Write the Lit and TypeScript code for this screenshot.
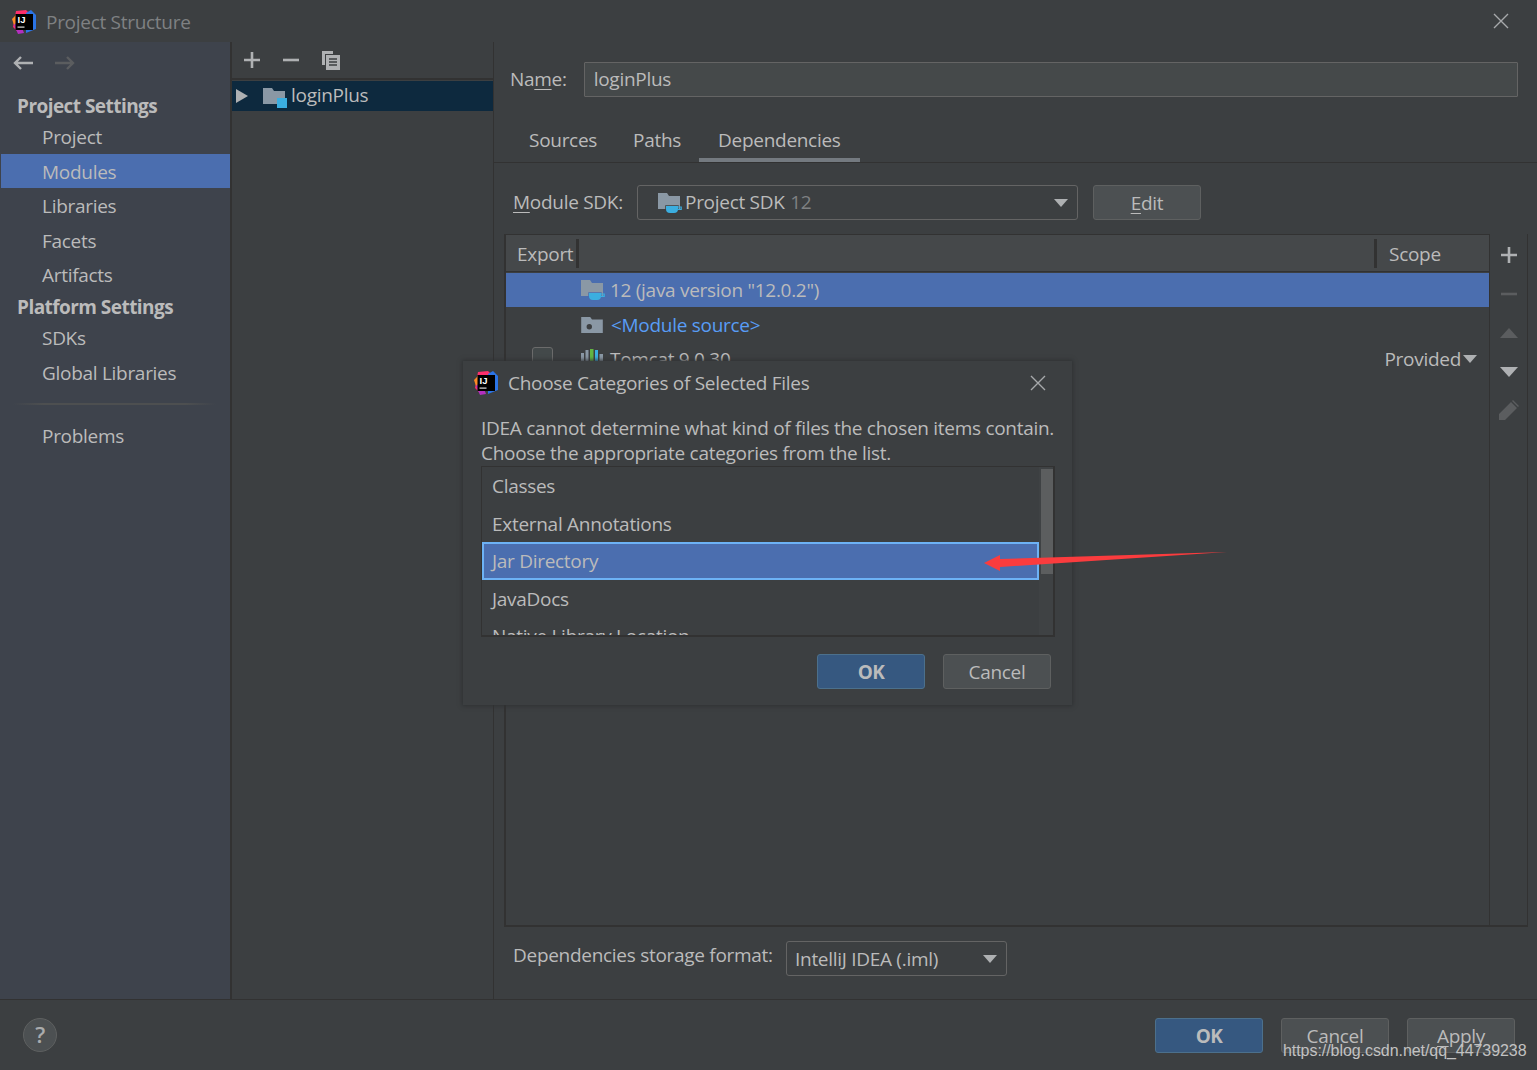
import { LitElement, html, css, svg } from "lit";
import { customElement } from "lit/decorators.js";

const logo = () => html`<svg class="logo" viewBox="0 0 24 24" width="24" height="24">
  <polygon points="4,1 14,0 18,4 6,22 1,17" fill="#fc2f6b"/>
  <polygon points="0,9 4,5 7,13 2,15" fill="#fd8a24"/>
  <polygon points="2,15 7,10 12,23 6,24" fill="#b32fbf"/>
  <polygon points="14,3 19,0 24,5 24,19 14,23" fill="#2b74e6"/>
  <rect x="3.5" y="4" width="17.5" height="16" fill="#000"/>
  <rect x="5.5" y="16.5" width="7" height="1.2" fill="#ddd"/>
  <text x="5.5" y="12.5" font-family="Liberation Sans" font-weight="700" font-size="9.5" letter-spacing="0" fill="#fff">IJ</text>
</svg>`;

const cup = (bg: string) => svg`<path d="M8 14h12v3a4 4 0 0 1-4 4h-4a4 4 0 0 1-4-4z" fill="#3baee0" stroke=${bg} stroke-width="1.5" paint-order="stroke"/><path d="M20 15h3.2v2.4H20" fill="none" stroke="#3baee0" stroke-width="1.2"/>`;
const sdkFolder = (bg: string) => html`<svg class="ic" viewBox="0 0 24 22" width="24" height="22"><path d="M0 1h9l2 3h11v13H0z" fill="#8a98a5"/>${cup(bg)}</svg>`;
const moduleFolder = () => html`<svg class="ic" viewBox="0 0 24 24" width="24" height="24"><path d="M0 3h9l2 3h11v13H0z" fill="#8a98a5"/><rect x="14" y="13" width="10" height="10" fill="#3baee0"/></svg>`;
const srcFolder = () => html`<svg class="ic" viewBox="0 0 24 20" width="22" height="18"><path d="M0 1h10l2 3h12v15H0z" fill="#8a98a5"/><circle cx="9" cy="12" r="3" fill="#3c3f41"/></svg>`;
const libIcon = () => html`<svg class="ic" viewBox="0 0 24 20" width="24" height="20"><rect x="0" y="4" width="3" height="16" fill="#8a98a5"/><rect x="4.5" y="1" width="3" height="19" fill="#8a98a5"/><rect x="9" y="0" width="3.5" height="20" fill="#62b543"/><rect x="14" y="1" width="3" height="19" fill="#3baee0"/><rect x="18.5" y="5" width="3.5" height="15" fill="#8a98a5"/></svg>`;
const caret = () => html`<svg class="caret" viewBox="0 0 14 8" width="14" height="8"><polygon points="0,0 14,0 7,8" fill="#aeb0b2"/></svg>`;
const closeX = (cls: string) => html`<svg class=${cls} viewBox="0 0 16 16" width="16" height="16"><path d="M1 1l14 14M15 1L1 15" stroke="#a7a9ab" stroke-width="1.4" fill="none"/></svg>`;

@customElement("app-root")
export class AppRoot extends LitElement {
  static styles = css`
    :host {
      display: block; position: relative; width: 1537px; height: 1070px; overflow: hidden;
      background: #3c3f41; color: #bbbbbb;
      font-family: "Open Sans", "Noto Sans", sans-serif; font-size: 19px; letter-spacing: -0.29px;
    }
    .u { text-decoration: underline; text-underline-offset: 3px; text-decoration-thickness: 1px; }
    .titlebar { display: flex; align-items: center; height: 42px; padding: 2px 0 0 12px; box-sizing: border-box; gap: 10px; color: #7f8183; }
    .titlebar .x { margin-left: auto; margin-right: 28px; margin-top: -2px; }
    .body { display: flex; height: 957px; border-bottom: 1px solid #323232; box-sizing: content-box; }
    .side { width: 229px; background: #3e434c; border-right: 2px solid #323232; padding-left: 1px; box-sizing: content-box; flex: none; }
    .nav { display: flex; align-items: center; height: 48px; padding: 0 0 0 11px; gap: 20px; box-sizing: border-box; margin-top: -3px; }
    .h { height: 31px; line-height: 37px; padding-left: 16px; font-weight: 700; margin-top: 1px; letter-spacing: -0.55px; }
    .h.p { height: 28.5px; line-height: 30px; margin-top: 0; }
    .item { height: 34.5px; line-height: 36px; padding-left: 41px; }
    .item.sel { background: #4b6eaf; }
    .sep { height: 2px; margin: 14px 14px 13px 12px; background: linear-gradient(90deg, #3e434c, #4d4f50 15%, #4d4f50 85%, #3e434c); }
    .tree { width: 261px; flex: none; border-right: 1px solid #323232; }
    .treebar { display: flex; align-items: center; height: 38px; padding-left: 11px; gap: 21px; border-bottom: 2px solid #323232; box-sizing: border-box; }
    .treerow { display: flex; align-items: center; height: 30px; margin-top: 1px; background: #0d293e; padding-left: 4px; box-sizing: border-box; }
    .treerow .arrow { margin-right: 15px; }
    .treerow .ic { margin-right: 4px; margin-top: 1px; }
    .treerow span { margin-top: -3px; }
    .main { flex: 1; display: flex; flex-direction: column; min-width: 0; }
    .namerow { display: flex; align-items: center; height: 37px; margin-top: 19px; padding: 0 19px 0 16px; gap: 17px; flex: none; }
    .namerow > span { margin-top: -1px; }
    .field { flex: 1; height: 35px; line-height: 33px; border: 1px solid #646464; background: #45494a; padding-left: 9px; box-sizing: border-box; border-radius: 1px; }
    .tabs { display: flex; height: 62px; margin-top: 3px; padding-left: 17px; border-bottom: 1px solid #323232; box-sizing: border-box; align-items: flex-end; flex: none; }
    .tab { padding: 0 16px 0 18px; height: 41px; line-height: 38px; box-sizing: border-box; margin-right: 2px; white-space: nowrap; }
    .tab.on { border-bottom: 4px solid #747a80; margin-right: 0; padding: 0 19px 0 19px; }
    .sdkrow { display: flex; align-items: center; height: 35px; margin-top: 22px; padding-left: 19px; flex: none; }
    .sdkrow .lbl { width: 124px; margin-top: -2px; }
    .combo { display: flex; align-items: center; height: 35px; border: 1px solid #646464; border-radius: 3px; box-sizing: border-box; position: relative; }
    .combo.sdk { width: 441px; padding-left: 20px; gap: 3px; }
    .combo.sdk > span { margin-top: -2px; }
    .combo .caret { position: absolute; right: 9px; top: 13px; }
    .muted { color: #7f8183; margin-left: 1px; }
    .btn { width: 108px; height: 35px; line-height: 35px; text-align: center; border: 1px solid #5e6060; border-radius: 3px; background: #4c5052; box-sizing: border-box; flex: none; }
    .btn.def { background: #365880; border-color: #4c708c; font-weight: 700; letter-spacing: -0.55px; }
    .sdkrow .btn { margin-left: 15px; }
    .tablewrap { display: flex; flex: none; height: 693px; margin: 14px 9px 0 10px; border-bottom: 2px solid #323232; border-left: 2px solid #323232; border-right: 1px solid #323232; box-sizing: border-box; }
    .table { flex: 1; min-width: 0; border-right: 1px solid #323232; }
    .thead { display: flex; height: 38px; background: #45484a; border-top: 1px solid #323232; box-sizing: border-box; align-items: center; border-bottom: 1px solid #323232; }
    .thead .c { height: 29px; line-height: 31px; box-sizing: border-box; }
    .thead .exp { width: 73px; padding-left: 11px; border-right: 3px solid #323232; }
    .thead .mid { width: 798px; border-right: 3px solid #323232; }
    .thead .sc { padding-left: 12px; }
    .row { display: flex; align-items: center; height: 35px; padding-left: 75px; gap: 5px; position: relative; box-sizing: border-box; }
    .row.sel { background: #4b6eaf; height: 34px; margin-top: 1px; }
    .row.src { gap: 8px; }
    .row.tom { padding-bottom: 2px; }
    .link { color: #589df6; }
    .check { position: absolute; left: 26px; top: 5px; width: 21px; height: 21px; border: 1px solid #6b6b6b; border-radius: 3px; background: #43494a; box-sizing: border-box; }
    .scope { position: absolute; right: 12px; top: 0; height: 33px; display: flex; align-items: center; gap: 2px; }
    .tools { width: 37px; flex: none; display: flex; flex-direction: column; align-items: center; box-sizing: border-box; }
    .tools svg { display: block; flex: none; }
    .t1 { margin-top: 12px; }
    .t2 { margin-top: 21px; }
    .t3 { margin-top: 25px; }
    .t4 { margin-top: 29px; }
    .t5 { margin-top: 23px; }
    .fmt { display: flex; align-items: center; height: 35px; margin-top: 14px; padding-left: 19px; flex: none; }
    .fmt .lbl { width: 273px; margin-top: -8px; white-space: nowrap; }
    .combo.iml { width: 221px; padding-left: 8px; }
    .footer { display: flex; align-items: center; height: 70px; padding: 0 22px 0 23px; gap: 18px; box-sizing: border-box; }
    .help { width: 34px; height: 34px; border-radius: 50%; background: #4c5052; border: 1px solid #5e6060; box-sizing: border-box; text-align: center; line-height: 31px; font-weight: 600; margin-right: auto; font-size: 22px; color: #a9abad; }
    .dialog { position: absolute; left: 463px; top: 361px; width: 609px; height: 344px; background: #3c3f41; box-shadow: 0 0 4px 1px #2f3133; padding: 0 17px 0 18px; box-sizing: border-box; display: flex; flex-direction: column; }
    .dtitle { display: flex; align-items: center; height: 44px; margin-left: -7px; gap: 10px; margin-right: -2px; flex: none; }
    .dtitle .x { margin-left: auto; margin-right: 11px; }
    .dtext { margin-top: 11px; line-height: 25px; white-space: nowrap; flex: none; }
    .list { position: relative; height: 171px; border: 1px solid #323232; border-width: 1px 2px 2px 1px; overflow: hidden; box-sizing: border-box; flex: none; }
    .li { height: 37.5px; line-height: 39px; padding-left: 10px; box-sizing: border-box; margin-right: 14px; white-space: nowrap; }
    .li.sel { background: #4b6eaf; border: 2px solid #6db2f5; line-height: 35px; padding-left: 8px; }
    .track { position: absolute; right: 0; top: 0; bottom: 0; width: 14px; background: #3f4244; }
    .thumb { position: absolute; right: 0; top: 2px; width: 12px; height: 105px; background: #5c5e5f; }
    .dbtns { display: flex; justify-content: flex-end; gap: 18px; margin-top: 17px; margin-right: 4px; }
    .arrow-red { position: absolute; left: 980px; top: 548px; }
    .mark { position: absolute; left: 1283px; top: 1041px; font-family: "Liberation Sans", sans-serif; font-size: 16px; letter-spacing: -0.06px; color: #c2c2c2; line-height: 20px; white-space: nowrap; }
  `;

  render() {
    return html`
      <div class="titlebar">${logo()}<span>Project Structure</span>${closeX("x")}</div>
      <div class="body">
        <aside class="side">
          <div class="nav">
            <svg viewBox="0 0 22 16" width="22" height="16"><path d="M21 8H3M9 2L3 8l6 6" stroke="#afb1b3" stroke-width="2.4" fill="none"/></svg>
            <svg viewBox="0 0 22 16" width="22" height="16"><path d="M1 8h18M13 2l6 6-6 6" stroke="#5b5d5f" stroke-width="2.4" fill="none"/></svg>
          </div>
          <div class="h">Project Settings</div>
          <div class="item">Project</div>
          <div class="item sel">Modules</div>
          <div class="item">Libraries</div>
          <div class="item">Facets</div>
          <div class="item">Artifacts</div>
          <div class="h p">Platform Settings</div>
          <div class="item">SDKs</div>
          <div class="item">Global Libraries</div>
          <div class="sep"></div>
          <div class="item">Problems</div>
        </aside>
        <section class="tree">
          <div class="treebar">
            <svg viewBox="0 0 18 18" width="18" height="18"><path d="M9 1v16M1 9h16" stroke="#afb1b3" stroke-width="2.6"/></svg>
            <svg viewBox="0 0 18 18" width="18" height="18"><path d="M1 9h16" stroke="#afb1b3" stroke-width="2.6"/></svg>
            <svg viewBox="0 0 20 20" width="20" height="20"><path d="M1 1h11v3H4v11H1z" fill="#afb1b3"/><path d="M5 5h14v15H5z" fill="#afb1b3"/><path d="M8 9h8M8 12h8M8 15h8" stroke="#3c3f41" stroke-width="1.4"/></svg>
          </div>
          <div class="treerow">
            <svg class="arrow" viewBox="0 0 12 14" width="12" height="14"><polygon points="0,0 12,7 0,14" fill="#aeb0b2"/></svg>
            ${moduleFolder()}<span>loginPlus</span>
          </div>
        </section>
        <section class="main">
          <div class="namerow"><span>Na<span class="u">m</span>e:</span><div class="field">loginPlus</div></div>
          <div class="tabs">
            <div class="tab">Sources</div><div class="tab">Paths</div><div class="tab on">Dependencies</div>
          </div>
          <div class="sdkrow">
            <span class="lbl"><span class="u">M</span>odule SDK:</span>
            <div class="combo sdk">${sdkFolder("#3c3f41")}<span>Project SDK <span class="muted">12</span></span>${caret()}</div>
            <div class="btn"><span class="u">E</span>dit</div>
          </div>
          <div class="tablewrap">
            <div class="table">
              <div class="thead">
                <div class="c exp">Export</div><div class="c mid"></div><div class="c sc">Scope</div>
              </div>
              <div class="row sel">${sdkFolder("#4b6eaf")}<span>12 (java version "12.0.2")</span></div>
              <div class="row src">${srcFolder()}<span class="link">&lt;Module source&gt;</span></div>
              <div class="row tom"><div class="check"></div>${libIcon()}<span>Tomcat 9.0.30</span><div class="scope">Provided${caret()}</div></div>
            </div>
            <div class="tools">
              <svg class="t1" viewBox="0 0 18 18" width="18" height="18"><path d="M9 1v16M1 9h16" stroke="#afb1b3" stroke-width="2.6"/></svg>
              <svg class="t2" viewBox="0 0 18 18" width="18" height="18"><path d="M1 9h16" stroke="#5b5d5f" stroke-width="2.6"/></svg>
              <svg class="t3" viewBox="0 0 18 10" width="18" height="10"><polygon points="0,10 18,10 9,0" fill="#5b5d5f"/></svg>
              <svg class="t4" viewBox="0 0 18 10" width="18" height="10"><polygon points="0,0 18,0 9,10" fill="#afb1b3"/></svg>
              <svg class="t5" viewBox="0 0 20 20" width="20" height="20"><path d="M0 20v-6L12 2l6 6L6 20z M14 0l6 6-1 1-6-6z" fill="#5b5d5f"/></svg>
            </div>
          </div>
          <div class="fmt">
            <span class="lbl">Dependencies storage format:</span>
            <div class="combo iml"><span>IntelliJ IDEA (.iml)</span>${caret()}</div>
          </div>
        </section>
      </div>
      <div class="footer">
        <div class="help">?</div>
        <div class="btn def">OK</div><div class="btn">Cancel</div><div class="btn"><span class="u">A</span>pply</div>
      </div>
      <div class="dialog">
        <div class="dtitle">${logo()}<span>Choose Categories of Selected Files</span>${closeX("x")}</div>
        <div class="dtext">IDEA cannot determine what kind of files the chosen items contain.<br>Choose the appropriate categories from the list.</div>
        <div class="list">
          <div class="li">Classes</div>
          <div class="li">External Annotations</div>
          <div class="li sel">Jar Directory</div>
          <div class="li">JavaDocs</div>
          <div class="li">Native Library Location</div>
          <div class="track"><div class="thumb"></div></div>
        </div>
        <div class="dbtns"><div class="btn def">OK</div><div class="btn">Cancel</div></div>
      </div>
      <svg class="arrow-red" viewBox="0 0 250 24" width="250" height="24"><polygon points="4,15 20,7 20,11 247,4 20,19 20,23" fill="#fb3c3e"/></svg>
      <div class="mark">https://blog.csdn.net/qq_44739238</div>
    `;
  }
}
